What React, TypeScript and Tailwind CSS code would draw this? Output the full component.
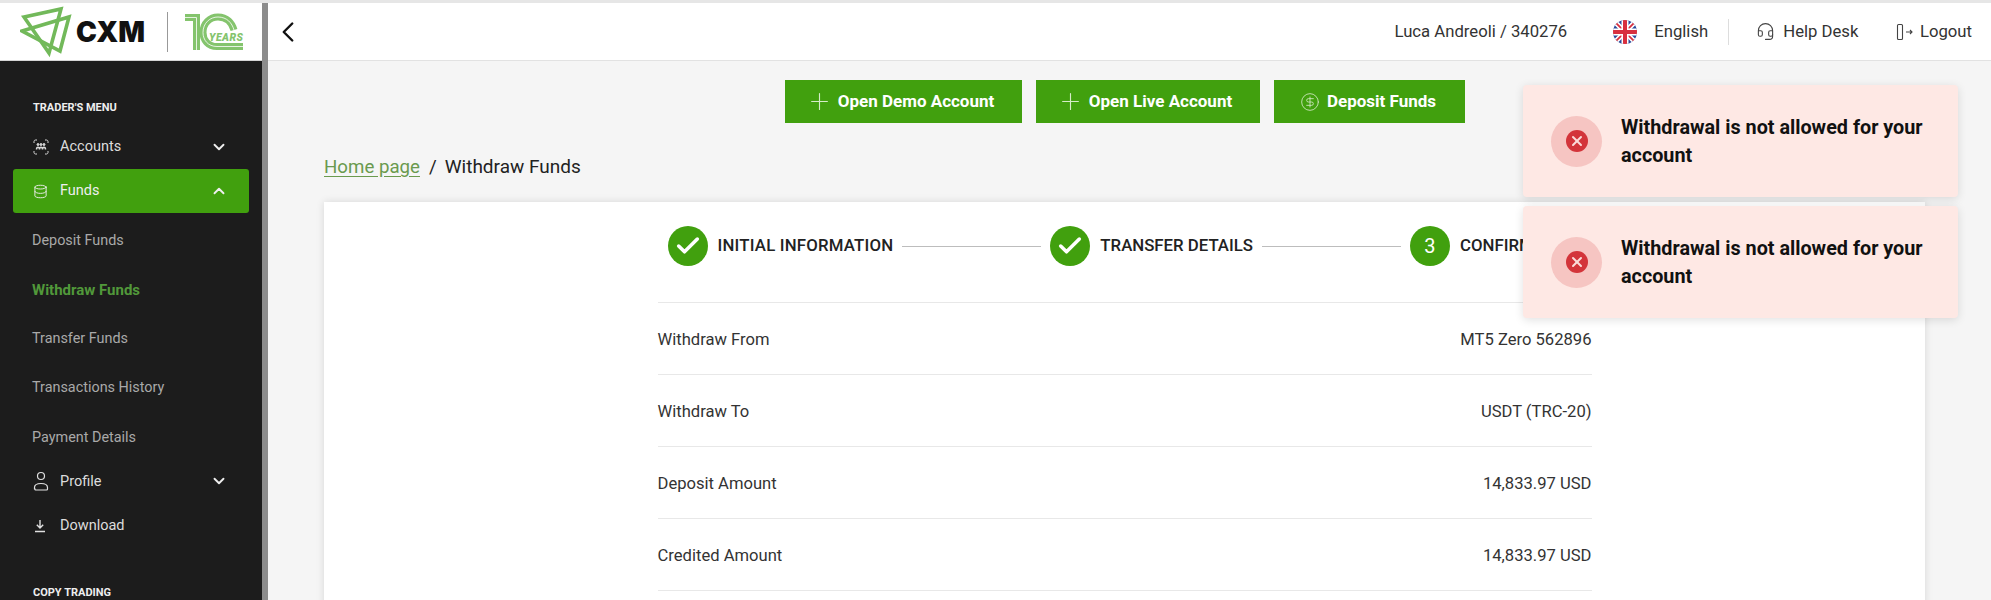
import { ChevronDown, ChevronUp, ChevronLeft, Database, Plus, CircleDollarSign, Headset, X, Check } from "lucide-react";

const font = "font-['Roboto','Noto_Sans',sans-serif]";

function AccountsIcon() {
  return (
    <svg width="16" height="16" viewBox="0 0 16 16" fill="none" stroke="#d8d8d8" strokeWidth="1">
      <path d="M1 4V2.500C1 1.700 1.700 1 2.500 1H4M12 1h1.500c.8 0 1.500.7 1.500 1.500V4M15 12v1.500c0 .8-.7 1.500-1.500 1.500H12M4 15H2.500C1.700 15 1 14.300 1 13.500V12" />
      <circle cx="5" cy="5.500" r="1" fill="#d8d8d8" />
      <circle cx="8" cy="5.500" r="1" fill="#d8d8d8" />
      <circle cx="11" cy="5.500" r="1" fill="#d8d8d8" />
      <path d="M3.500 10.500c0-3 3-3 3 0M6.500 10.500c0-3 3-3 3 0M9.500 10.500c0-3 3-3 3 0" strokeWidth="1.500" />
    </svg>
  );
}

function ProfileIcon() {
  return (
    <svg width="16" height="20" viewBox="0 0 16 20" fill="none" stroke="#e0e0e0" strokeWidth="1.200">
      <circle cx="8" cy="5" r="3.500" />
      <path d="M1.500 18v-1.500c0-2.500 2-4 6.500-4s6.500 1.500 6.500 4V18c0 .5-.5 1-1 1h-11c-.5 0-.5-.5-.5-1z" />
    </svg>
  );
}

function DownloadIcon() {
  return (
    <svg width="14" height="14" viewBox="0 0 14 14" fill="none" stroke="#e0e0e0" strokeWidth="1.400">
      <path d="M7 1v7.500M3.800 5.800 7 9l3.200-3.200M2 12.500h10" />
    </svg>
  );
}

function LogoutIcon() {
  return (
    <svg width="18" height="18" viewBox="0 0 18 18" fill="none" stroke="#444" strokeWidth="1.100">
      <rect x="1.500" y="1.500" width="5" height="15" rx="1" />
      <path d="M10 9h6M14 7l2 2-2 2" />
    </svg>
  );
}

function UkFlag() {
  return (
    <svg width="24" height="24" viewBox="0 0 24 24">
      <defs>
        <clipPath id="flag-circle">
          <circle cx="12" cy="12" r="12" />
        </clipPath>
      </defs>
      <g clipPath="url(#flag-circle)">
        <rect width="24" height="24" fill="#2b4a9b" />
        <path d="M0 0 24 24M24 0 0 24" stroke="#fff" strokeWidth="5" />
        <path d="M0 0 24 24M24 0 0 24" stroke="#d8303f" strokeWidth="1.800" />
        <path d="M12 0v24M0 12h24" stroke="#fff" strokeWidth="7" />
        <path d="M12 0v24M0 12h24" stroke="#d8303f" strokeWidth="4" />
      </g>
    </svg>
  );
}

function Logo() {
  return (
    <div className="h-[58px] bg-white border-b border-[#d5d5d5] flex items-center pl-[20px] shrink-0">
      <svg width="52" height="52" viewBox="0 0 52 52" fill="none" stroke="#72b95a" strokeWidth="3.600" strokeLinejoin="miter">
        <path d="M4 11 41 3 29 47z" />
        <path d="M2 25 49 11 40 45z" />
      </svg>
      <span className="ml-[4px] font-['Inter',sans-serif] font-black text-[28px] text-[#111] leading-none">CXM</span>
      <div className="w-px h-[40px] bg-[#999] ml-[22px]" />
      <svg width="60" height="38" viewBox="0 0 60 38" fill="none" className="ml-[17px]">
        <g stroke="#84c46d" strokeWidth="7">
          <path d="M0 4.500H11.500V37" />
          <path d="M58 33.500H32C23 33.500 18 27 18 19.500C18 10 25 4 33 4C42 4 47 10 49 17" />
        </g>
        <g stroke="#fff" strokeWidth="0.800">
          <path d="M0 4.500H11.500V37" />
          <path d="M58 33.500H32C23 33.500 18 27 18 19.500C18 10 25 4 33 4C42 4 47 10 49 17" />
        </g>
        <text x="24" y="28" fill="#84c46d" fontFamily="Roboto, sans-serif" fontSize="10.500" fontWeight="900" fontStyle="italic" textLength="34">YEARS</text>
      </svg>
    </div>
  );
}

function Sidebar() {
  const subItems = ["Deposit Funds", "Withdraw Funds", "Transfer Funds", "Transactions History", "Payment Details"];
  return (
    <aside className="w-[268px] shrink-0 border-r-[6px] border-[#8c8c8c] flex flex-col">
      <Logo />
      <nav className="flex-1 bg-[#1c1c1c] pt-[40px] overflow-hidden">
        <p className="pl-[33px] text-[11px] leading-[14px] font-bold text-[#eee]">TRADER'S MENU</p>
        <div className="mt-[10px] h-[44px] pl-[33px] pr-[34px] flex items-center text-[#dcdcdc] text-[14.500px]">
          <AccountsIcon />
          <span className="ml-[11px] flex-1">Accounts</span>
          <ChevronDown size={18} strokeWidth={2.500} className="text-[#eee]" />
        </div>
        <div className="mx-[13px] h-[44px] pl-[20px] pr-[21px] rounded-[3px] bg-[#41a00e] flex items-center text-[#eee] text-[14.500px]">
          <Database size={15} strokeWidth={1.500} />
          <span className="ml-[12px] flex-1">Funds</span>
          <ChevronUp size={18} strokeWidth={2.500} />
        </div>
        <ul className="mt-[3px]">
          {subItems.map((item) => (
            <li
              key={item}
              className={`h-[49.200px] pl-[32px] flex items-center ${
                item === "Withdraw Funds" ? "text-[#51983a] text-[15px] font-bold" : "text-[#a9a9a9] text-[14.400px]"
              }`}
            >
              {item}
            </li>
          ))}
        </ul>
        <div className="h-[45px] -mt-[3px] pl-[33px] pr-[34px] flex items-center text-[#dcdcdc] text-[14.500px]">
          <ProfileIcon />
          <span className="ml-[11px] flex-1">Profile</span>
          <ChevronDown size={18} strokeWidth={2.500} className="text-[#eee]" />
        </div>
        <div className="h-[44px] pl-[33px] flex items-center text-[#dcdcdc] text-[14.500px]">
          <DownloadIcon />
          <span className="ml-[13px]">Download</span>
        </div>
        <p className="mt-[38px] pl-[33px] text-[11px] leading-[14px] font-bold text-[#eee]">COPY TRADING</p>
      </nav>
    </aside>
  );
}

function Header() {
  return (
    <header className="h-[58px] shrink-0 bg-white border-b border-[#e2e2e2] flex items-center pl-[3px] pr-[19px] text-[16.700px] text-[#333]">
      <ChevronLeft size={34} strokeWidth={1.700} className="text-[#111]" />
      <span className="ml-auto">Luca Andreoli / 340276</span>
      <div className="ml-[46px]">
        <UkFlag />
      </div>
      <span className="ml-[17px]">English</span>
      <div className="w-px h-[26px] bg-[#ddd] ml-[20px]" />
      <Headset size={19} strokeWidth={1.400} className="ml-[27px] text-[#444]" />
      <span className="ml-[8px]">Help Desk</span>
      <div className="ml-[38px]">
        <LogoutIcon />
      </div>
      <span className="ml-[5.500px]">Logout</span>
    </header>
  );
}

function Step({ label, done, n, wide }: { label: string; done?: boolean; n?: number; wide?: boolean }) {
  return (
    <div className="flex items-center shrink-0">
      <div className="w-[40px] h-[40px] rounded-full bg-[#41a00e] flex items-center justify-center text-white text-[20px]">
        {done ? <Check size={28} strokeWidth={3} /> : n}
      </div>
      <span className={`ml-[10px] text-[16.800px] font-medium text-[#222] ${wide ? "tracking-[0.2px]" : ""}`}>{label}</span>
    </div>
  );
}

function Toast() {
  return (
    <div className="w-[435px] h-[112px] rounded-[4px] bg-[#fee8e4] shadow-[0_2px_10px_rgba(0,0,0,0.12)] flex items-center pl-[28px] pr-[30px]">
      <div className="w-[51px] h-[51px] rounded-full bg-[#f6c5c2] flex items-center justify-center shrink-0">
        <div className="w-[22px] h-[22px] rounded-full bg-[#d3343a] flex items-center justify-center">
          <X size={16} strokeWidth={3} className="text-[#fbdcd9]" />
        </div>
      </div>
      <p className="ml-[19px] pt-[2px] text-[19.800px] leading-[28px] font-bold text-[#111]">Withdrawal is not allowed for your account</p>
    </div>
  );
}

const rows = [
  ["Withdraw From", "MT5 Zero 562896"],
  ["Withdraw To", "USDT (TRC-20)"],
  ["Deposit Amount", "14,833.97 USD"],
  ["Credited Amount", "14,833.97 USD"],
];

export default function App() {
  return (
    <div className={`${font} relative h-[600px] overflow-hidden bg-[#f5f5f5] border-t-[3px] border-[#e6e6e6] flex`}>
      <Sidebar />
      <main className="flex-1 min-w-0 flex flex-col">
        <Header />
        <div className="pl-[56px] pr-[66px]">
          <div className="pt-[19px] flex justify-center gap-[14px]">
            {[
              { label: "Open Demo Account", cls: "w-[237px] gap-[5px] pr-[6px]", icon: <Plus size={27} strokeWidth={1} className="text-[#d5ebc8]" /> },
              { label: "Open Live Account", cls: "w-[224px] gap-[5px] pr-[6px]", icon: <Plus size={27} strokeWidth={1} className="text-[#d5ebc8]" /> },
              { label: "Deposit Funds", cls: "w-[191px] gap-[7px] pr-[2px]", icon: <CircleDollarSign size={20} strokeWidth={1} className="text-[#d5ebc8]" /> },
            ].map((b) => (
              <button
                key={b.label}
                className={`${b.cls} h-[43px] bg-[#41a00e] text-white text-[17px] font-bold flex items-center justify-center`}
              >
                {b.icon}
                {b.label}
              </button>
            ))}
          </div>
          <div className="mt-[31px] text-[18.700px] leading-[26px] text-[#222]">
            <a className="text-[#6a9a4e] underline underline-offset-[3px]">Home page</a>
            <span className="ml-[9px] mr-[8px]">/</span>
            <span className="text-[19px]">Withdraw Funds</span>
          </div>
          <section className="mt-[22px] bg-white shadow-[0_0_8px_rgba(0,0,0,0.12)] h-[500px]">
            <div className="w-[934px] mx-auto">
              <div className="h-[101px] pl-[10px] pt-[24px] flex items-start border-b border-[#e8e8e8]">
                <div className="h-[40px] flex items-center">
                  <Step label="INITIAL INFORMATION" done wide />
                  <div className="w-[139px] h-px bg-[#bdbdbd] mx-[9px] shrink-0" />
                  <Step label="TRANSFER DETAILS" done />
                  <div className="w-[139px] h-px bg-[#bdbdbd] mx-[9px] shrink-0" />
                  <Step label="CONFIRMATION" n={3} />
                </div>
              </div>
              {rows.map(([k, v]) => (
                <div key={k} className="h-[72px] pt-[4px] flex items-center justify-between border-b border-[#e8e8e8] text-[16.600px] text-[#333]">
                  <span>{k}</span>
                  <span>{v}</span>
                </div>
              ))}
            </div>
          </section>
        </div>
      </main>
      {/* toasts sit over the page */}
      <div className="absolute top-[82px] right-[33px] flex flex-col gap-[9px]">
        <Toast />
        <Toast />
      </div>
    </div>
  );
}
